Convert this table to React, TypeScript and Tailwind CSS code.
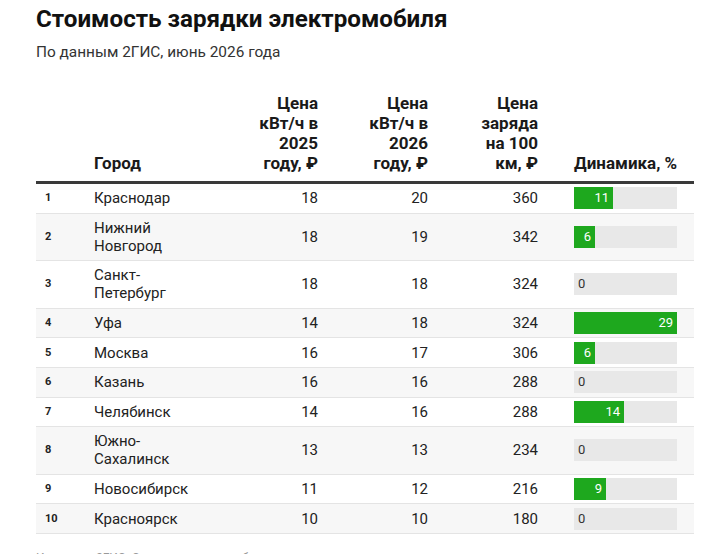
import React from 'react';

type Row = {
  rank: number;
  city: string[];
  p2025: number;
  p2026: number;
  per100: number;
  dyn: number;
};

const rows: Row[] = [
  { rank: 1, city: ['Краснодар'], p2025: 18, p2026: 20, per100: 360, dyn: 11 },
  { rank: 2, city: ['Нижний', 'Новгород'], p2025: 18, p2026: 19, per100: 342, dyn: 6 },
  { rank: 3, city: ['Санкт-', 'Петербург'], p2025: 18, p2026: 18, per100: 324, dyn: 0 },
  { rank: 4, city: ['Уфа'], p2025: 14, p2026: 18, per100: 324, dyn: 29 },
  { rank: 5, city: ['Москва'], p2025: 16, p2026: 17, per100: 306, dyn: 6 },
  { rank: 6, city: ['Казань'], p2025: 16, p2026: 16, per100: 288, dyn: 0 },
  { rank: 7, city: ['Челябинск'], p2025: 14, p2026: 16, per100: 288, dyn: 14 },
  { rank: 8, city: ['Южно-', 'Сахалинск'], p2025: 13, p2026: 13, per100: 234, dyn: 0 },
  { rank: 9, city: ['Новосибирск'], p2025: 11, p2026: 12, per100: 216, dyn: 9 },
  { rank: 10, city: ['Красноярск'], p2025: 10, p2026: 10, per100: 180, dyn: 0 },
];

const MAX = 29;
const BAR_W = 103;

function Bar({ value }: { value: number }) {
  if (value === 0) {
    return (
      <div className="h-[22px] w-[103px] bg-[#e8e8e8] pl-[4px] text-[13px] leading-[22px] text-[#333]">
        0
      </div>
    );
  }
  const w = Math.round((value / MAX) * BAR_W);
  return (
    <div className="h-[22px] w-[103px] bg-[#e8e8e8]">
      <div
        className="flex h-full justify-end bg-[#1ea81e] pr-[4px] text-[13px] leading-[22px] text-white"
        style={{ width: w }}
      >
        {value}
      </div>
    </div>
  );
}

export default function App() {
  return (
    <div className="h-[554px] w-[717px] overflow-hidden bg-white pl-[36px] pr-[23px] font-['Roboto',sans-serif] text-[#222]">
      <h1 className="pt-[4px] text-[24.2px] font-bold leading-[30px] text-[#111]">
        Стоимость зарядки электромобиля
      </h1>
      <p className="mt-[8px] text-[15.4px] leading-[20px] text-[#333]">
        По данным 2ГИС, июнь 2026 года
      </p>

      <table className="mt-[31px] w-[658px] table-fixed border-collapse">
        <colgroup>
          <col className="w-[50px]" />
          <col className="w-[128px]" />
          <col className="w-[112px]" />
          <col className="w-[110px]" />
          <col className="w-[110px]" />
          <col className="w-[148px]" />
        </colgroup>
        <thead>
          <tr className="border-b-[3px] border-[#3a3a3a] align-bottom text-[17px] font-bold leading-[20px] text-[#1a1a1a]">
            <th className="pb-[8px]"></th>
            <th className="pb-[8px] pl-[8px] text-left">Город</th>
            <th className="pb-[8px] pr-[8px] text-right">
              Цена<br />кВт/ч в<br />2025<br />году, ₽
            </th>
            <th className="pb-[8px] pr-[8px] text-right">
              Цена<br />кВт/ч в<br />2026<br />году, ₽
            </th>
            <th className="pb-[8px] pr-[8px] text-right">
              Цена<br />заряда<br />на 100<br />км, ₽
            </th>
            <th className="pb-[8px] pl-[28px] text-left whitespace-nowrap">Динамика, %</th>
          </tr>
        </thead>
        <tbody>
          {rows.map((r, i) => (
            <tr
              key={r.rank}
              className={
                'border-b border-[#e4e4e4] text-[15px] leading-[18px] ' +
                (i % 2 === 1 ? 'bg-[#f7f7f7]' : 'bg-white')
              }
            >
              <td className="py-[5.3px] pl-[9px] align-middle text-[11px] font-bold">{r.rank}</td>
              <td className="py-[5.3px] pl-[8px] align-middle">
                {r.city.map((c, j) => (
                  <div key={j}>{c}</div>
                ))}
              </td>
              <td className="py-[5.3px] pr-[8px] text-right align-middle">{r.p2025}</td>
              <td className="py-[5.3px] pr-[8px] text-right align-middle">{r.p2026}</td>
              <td className="py-[5.3px] pr-[8px] text-right align-middle">{r.per100}</td>
              <td className="py-[3px] pl-[28px] align-middle">
                <Bar value={r.dyn} />
              </td>
            </tr>
          ))}
        </tbody>
      </table>

      <p className="mt-[16px] text-[12px] leading-[16px] text-[#999]">
        Источник: 2ГИС. Средняя цена на публичных зарядных станциях
      </p>
    </div>
  );
}
